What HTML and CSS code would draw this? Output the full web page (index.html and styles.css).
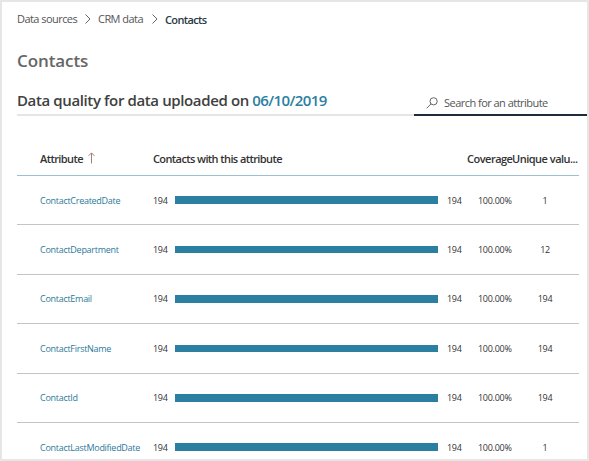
FILE: index.html
```html
<!DOCTYPE html>
<html lang="en">
<head>
<meta charset="utf-8">
<title>Contacts</title>
<link rel="stylesheet" href="styles.css">
</head>
<body>
<main class="frame">
  <nav class="crumbs">
    <a class="c1">Data sources</a>
    <svg class="chev" viewBox="0 0 6 10"><path d="M0.5 0.5 5 5 0.5 9.5"/></svg>
    <a class="c2">CRM data</a>
    <svg class="chev" viewBox="0 0 6 10"><path d="M0.5 0.5 5 5 0.5 9.5"/></svg>
    <span class="current">Contacts</span>
  </nav>
  <h1>Contacts</h1>
  <div class="toolbar">
    <h2><span class="lead">Data quality for data uploaded on</span> <span class="date">06/10/2019</span></h2>
    <div class="search">
      <svg class="glass" viewBox="0 0 12 12"><circle cx="7.6" cy="4.3" r="3.6"/><path d="M5 6.9 0.6 11.3"/></svg>
      <span>Search for an attribute</span>
    </div>
  </div>
  <section class="table">
    <div class="row head">
      <div class="attr"><span>Attribute</span><svg class="arrow" viewBox="0 0 7 12"><path d="M3.5 11.5V1M0.6 3.8 3.5 0.9 6.4 3.8"/></svg></div>
      <div class="contacts">Contacts with this attribute</div>
      <div class="coverage">Coverage</div>
      <div class="unique">Unique valu...</div>
    </div>
    <div class="row"><a class="attr">ContactCreatedDate</a><div class="meter"><span>194</span><i class="bar"></i><span>194</span></div><div class="coverage">100.00%</div><div class="unique">1</div></div>
    <div class="row"><a class="attr">ContactDepartment</a><div class="meter"><span>194</span><i class="bar"></i><span>194</span></div><div class="coverage">100.00%</div><div class="unique">12</div></div>
    <div class="row"><a class="attr">ContactEmail</a><div class="meter"><span>194</span><i class="bar"></i><span>194</span></div><div class="coverage">100.00%</div><div class="unique">194</div></div>
    <div class="row"><a class="attr">ContactFirstName</a><div class="meter"><span>194</span><i class="bar"></i><span>194</span></div><div class="coverage">100.00%</div><div class="unique">194</div></div>
    <div class="row"><a class="attr">ContactId</a><div class="meter"><span>194</span><i class="bar"></i><span>194</span></div><div class="coverage">100.00%</div><div class="unique">194</div></div>
    <div class="row"><a class="attr">ContactLastModifiedDate</a><div class="meter"><span>194</span><i class="bar"></i><span>194</span></div><div class="coverage">100.00%</div><div class="unique">1</div></div>
  </section>
</main>
</body>
</html>
```
FILE: styles.css
```css
* { box-sizing: border-box; }
body { margin: 0; background: #fff; font-family: "Open Sans", "Noto Sans", sans-serif; color: #333; }
.frame { width: 589px; height: 461px; border: 2px solid #e6e6e6; padding-left: 15px; overflow: hidden; }
svg { fill: none; stroke: #666; stroke-width: 1; flex: none; }

.crumbs { display: flex; align-items: center; height: 33px; font-size: 11px; letter-spacing: -0.55px; color: #555; white-space: nowrap; }
.crumbs .c1 { width: 68px; }
.crumbs .c2 { width: 54px; }
.crumbs .current { font-weight: 600; color: #2b3a45; letter-spacing: -0.65px; padding-top: 2px; }
.chev { width: 6px; height: 10px; margin-right: 7px; }

h1 { margin: 14px 0 0; font-size: 17px; line-height: 24px; font-weight: 600; color: #666; letter-spacing: -0.1px; }

.toolbar { display: flex; margin-top: 14px; height: 29px; }
h2 { margin: 0; width: 397px; font-size: 15px; line-height: 27px; font-weight: 600; border-bottom: 2px solid #e6e6e6; white-space: nowrap; color: #404040; letter-spacing: -0.38px; }
.date { color: #2b7fa1; letter-spacing: -0.6px; }
.search { flex: 1; display: flex; align-items: center; padding: 4px 0 0 12px; border-bottom: 2px solid #1d2b3c; font-size: 11px; letter-spacing: -0.53px; color: #555; }
.glass { width: 12px; height: 12px; margin-right: 6px; }

.table { width: 562px; margin-top: 26px; }
.row { display: grid; grid-template-columns: 113px 314px 68px 44px; padding-left: 23px; height: 49.4px; align-items: center; border-bottom: 1px solid #c4c4c4; font-size: 9px; white-space: nowrap; letter-spacing: -0.28px; }
.head { height: 34px; border-color: #9cc0cf; font-size: 11px; font-weight: 600; letter-spacing: -0.6px; }
.attr { color: #2b7a9b; }
.head .attr { display: flex; align-items: center; color: #333; }
.arrow { width: 7px; height: 12px; margin: 0 0 1px 5px; stroke: #a08070; }
.meter { display: flex; align-items: center; }
.meter span { flex: none; width: 22px; }
.bar { flex: none; width: 263px; height: 7.7px; margin-right: 9px; background: #2b7fa1; }
.coverage { padding-left: 11px; color: #333; }
.unique { width: 20px; text-align: center; color: #333; }
.head .coverage, .head .unique { padding: 0; width: auto; text-align: left; }
.head .coverage { letter-spacing: -0.5px; }
.head .unique { margin-left: -23px; letter-spacing: -0.5px; }
```
